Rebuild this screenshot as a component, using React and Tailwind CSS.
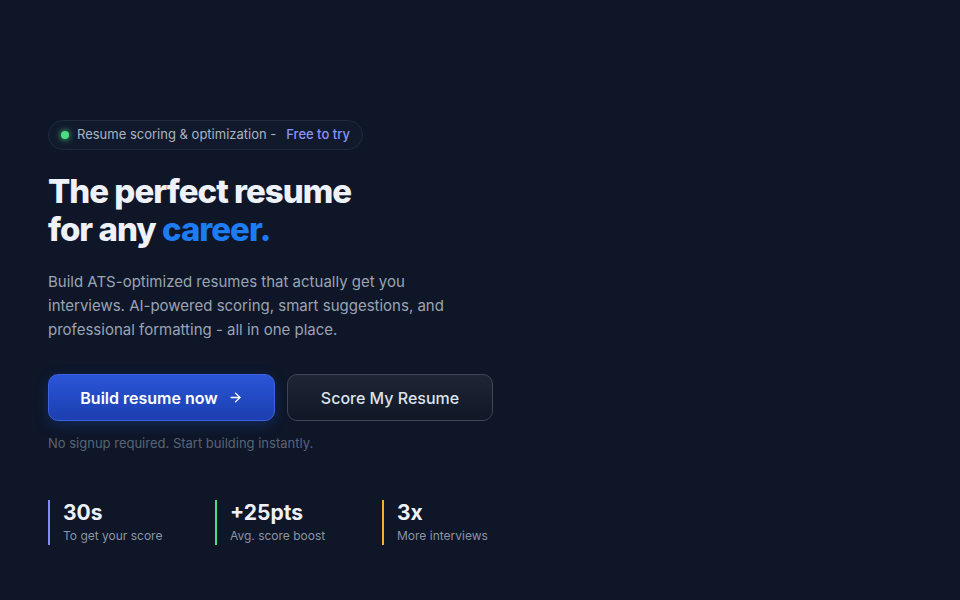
import React from "react";

const stats = [
  { value: "30s", label: "To get your score", border: "border-[#818cf8]" },
  { value: "+25pts", label: "Avg. score boost", border: "border-[#4ade80]" },
  { value: "3x", label: "More interviews", border: "border-[#f5b02a]" },
];

export default function App() {
  return (
    <div
      className="min-h-screen w-full bg-[#0e1628] text-white"
      style={{ fontFamily: "Inter, 'Noto Sans', sans-serif" }}
    >
      <div className="px-12 pt-[120px]">
        {/* Badge */}
        <div className="inline-flex h-[30px] items-center gap-2 rounded-full border border-[#1f2a3d] bg-[#111a2c] pl-[12px] pr-[12px] text-[13px]">
          <span className="h-2 w-2 rounded-full bg-[#4ade80] shadow-[0_0_6px_#4ade80]" />
          <span className="text-[#aab4c3]">Resume scoring &amp; optimization -</span>
          <span className="ml-0.5 font-medium text-[#8b93f8]">Free to try</span>
        </div>

        {/* Heading */}
        <h1 className="mt-[22px] text-[33px] font-extrabold leading-[38px] tracking-[-0.03em] text-[#eef2f8]">
          The perfect resume
          <br />
          for any <span className="text-[#1d7cf2]">career.</span>
        </h1>

        <p className="mt-[22px] max-w-[420px] text-[15px] leading-[24px] text-[#9aa4b4]">
          Build ATS-optimized resumes that actually get you interviews. AI-powered scoring, smart
          suggestions, and professional formatting - all in one place.
        </p>

        {/* Buttons */}
        <div className="mt-[32px] flex gap-[12px]">
          <button className="flex h-[47px] w-[227px] items-center justify-center gap-2.5 rounded-[10px] border border-[#3b62e0] bg-gradient-to-b from-[#2a55d8] to-[#1c3fb0] text-[16px] font-semibold text-white shadow-[0_4px_14px_rgba(37,99,235,0.25)]">
            Build resume now
            <svg width="15" height="15" viewBox="0 0 24 24" fill="none" stroke="currentColor" strokeWidth="2.2" strokeLinecap="round" strokeLinejoin="round">
              <path d="M5 12h14" />
              <path d="m12 5 7 7-7 7" />
            </svg>
          </button>
          <button className="flex h-[47px] w-[206px] items-center justify-center rounded-[10px] border border-[#3c4657] bg-gradient-to-b from-[#1e2635] to-[#101726] text-[16px] font-medium text-[#dde3ec]">
            Score My Resume
          </button>
        </div>

        <p className="mt-[13px] text-[13px] text-[#596476]">
          No signup required. Start building instantly.
        </p>

        {/* Stats */}
        <div className="mt-[46px] flex">
          {stats.map((s) => (
            <div key={s.value} className={`w-[167px] border-l-2 pb-[2px] pl-[13px] ${s.border}`}>
              <div className="text-[21px] font-bold leading-[26px] text-[#eef2f8]">{s.value}</div>
              <div className="mt-[2px] text-[12px] leading-[15px] text-[#8a94a6]">{s.label}</div>
            </div>
          ))}
        </div>
      </div>
    </div>
  );
}
